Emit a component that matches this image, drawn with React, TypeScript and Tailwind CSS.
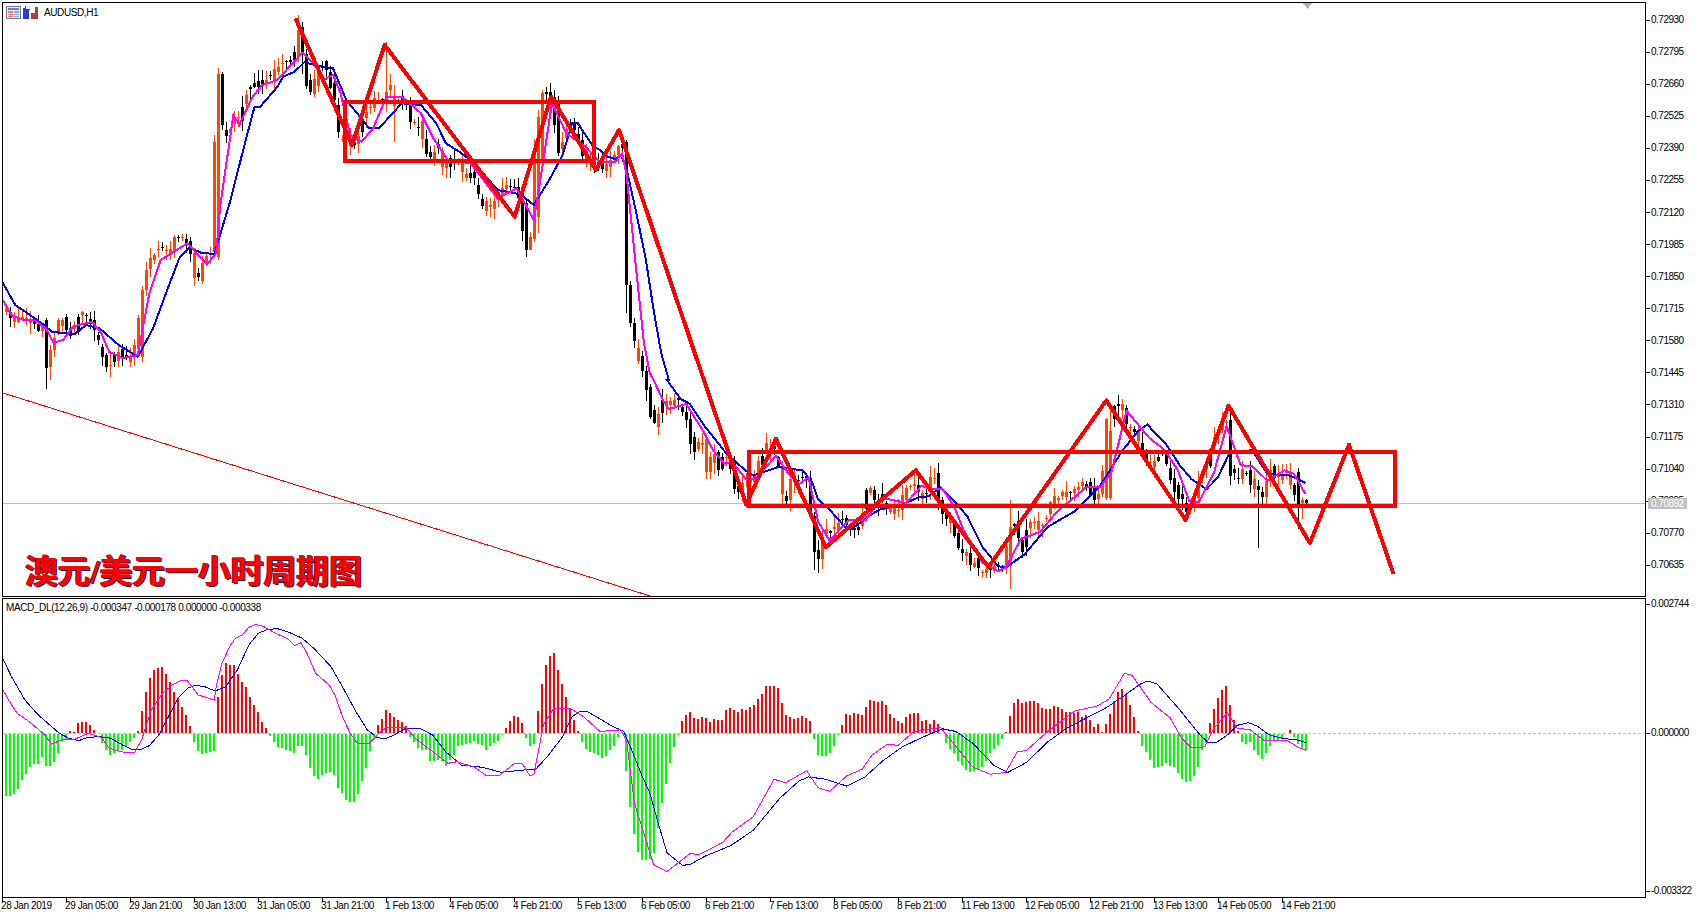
import React from "react";

type P = [number, number];
const Z1 = (a: number[][]): P[] => a.map(([x, y]) => [x / 2.613, y / 3]);
const Z2 = (a: number[][]): P[] => a.map(([x, y]) => [x / 2.613, 400 + y / 3]);
const Z3 = (a: number[][]): P[] => a.map(([x, y]) => [600 + x / 2.613, y / 3]);
const Z4 = (a: number[][]): P[] => a.map(([x, y]) => [600 + x / 2.613, 380 + y / 2.93]);
const Z5 = (a: number[][]): P[] => a.map(([x, y]) => [1100 + x / 2.63, 380 + y / 2.93]);
const pts = (a: P[]) => a.map(([x, y]) => `${x.toFixed(1)},${y.toFixed(1)}`).join(" ");

const blueThick: P[] = [
  ...Z1([[7,848],[40,915],[85,950],[115,975],[135,995],[170,1000],[195,1003],[225,975],[260,985],[310,1035],[360,1070],[400,985],[440,860],[470,770],[495,742],[525,758],[560,762],[600,610],[640,430],[665,320],[680,320],[725,260],[740,230],[770,215],[795,187],[830,197],[870,205],[905,300],[965,385],[990,385],[1050,310],[1100,315],[1140,370],[1165,430],[1200,455],[1240,490],[1300,570],[1360,583],[1395,615],[1440,530],[1470,465],[1495,370],[1510,370],[1550,440]]),
  ...Z3([[0,450],[20,470],[40,477],[55,465],[70,510],[95,640],[120,780],[140,930],[160,1060],[180,1140]]),
  ...Z4([[175,0],[210,55],[235,70],[270,130],[330,215],[380,265],[400,280],[440,265],[465,255],[530,265],[555,300],[570,350],[600,380],[640,430],[660,435],[700,400],[730,380],[790,365],[830,345],[860,340],[890,315],[930,360],[960,400],[1000,490],[1040,545],[1060,550],[1110,510],[1170,430],[1240,385],[1280,340],[1306,312]]),
  ...Z5([[60,205],[100,150],[125,130],[140,150],[175,190],[210,250],[240,290],[280,320],[310,285],[340,215],[400,205],[440,275],[500,280],[541,302]]),
];
const pinkThick: P[] = [
  ...Z1([[7,900],[30,945],[60,960],[90,960],[120,985],[140,1028],[165,1020],[190,980],[240,965],[265,1000],[285,1055],[320,1075],[360,1065],[390,880],[420,780],[490,730],[540,793],[565,760],[575,620],[610,345],[625,375],[660,290],[685,255],[725,240],[790,158],[820,190],[845,240],[870,225],[890,280],[915,405],[945,425],[975,385],[1010,290],[1050,290],[1100,340],[1130,410],[1170,480],[1230,490],[1300,595],[1350,565],[1395,660],[1420,480],[1442,310],[1480,400],[1530,440]]),
  ...Z3([[0,487],[40,485],[58,460],[70,530],[85,700],[100,870],[115,1030],[130,1120]]),
  ...Z4([[140,0],[165,60],[180,85],[225,70],[270,150],[295,205],[325,245],[345,240],[385,295],[410,285],[460,222],[490,270],[520,305],[545,285],[570,415],[600,470],[650,410],[695,410],[735,345],[800,360],[840,310],[865,320],[895,320],[925,370],[950,440],[1000,535],[1040,560],[1060,550],[1100,465],[1150,445],[1195,385],[1270,315],[1300,312]]),
  ...Z5([[0,315],[30,270],[70,90],[100,130],[130,170],[170,205],[205,265],[235,355],[260,358],[300,270],[333,135],[370,250],[400,252],[440,295],[485,265],[510,275],[541,335]]),
];
const zigzag: P[] = [
  ...Z1([[772,55],[920,435],[1005,135],[1345,650],[1440,290],[1557,510]]),
  ...Z3([[50,390]]),
  ...Z4([[382,365],[460,172],[590,490],[825,265],[1015,548],[1323,60],[1530,410]]),
  ...Z5([[338,75],[552,478],[655,190],[772,568]]),
];
const pricePath: P[] = [
  ...Z1([[7,920],[15,950],[30,945],[45,975],[60,940],[75,965],[90,950],[100,1000],[118,970],[125,1100],[135,1050],[150,990],[165,945],[175,985],[195,1000],[205,940],[225,935],[245,985],[265,1040],[275,1090],[295,1095],[310,1050],[335,1085],[360,1040],[372,870],[385,810],[395,770],[425,740],[445,760],[465,710],[490,710],[500,760],[510,820],[525,830],[535,770],[555,760],[570,230],[582,370],[600,415],[612,340],[625,370],[640,300],[655,250],[680,250],[715,225],[740,180],[770,180],[782,70],[790,130],[802,230],[810,280],[820,265],[835,210],[850,190],[875,280],[888,410],[905,400],[925,450],[945,380],[965,320],[990,295],[1010,300],[1020,235],[1030,310],[1050,290],[1065,310],[1075,370],[1100,370],[1125,480],[1145,430],[1165,510],[1180,480],[1200,470],[1210,520],[1240,530],[1255,590],[1275,630],[1300,590],[1325,550],[1355,570],[1375,750],[1390,710],[1405,350],[1420,290],[1445,290],[1460,460],[1480,400],[1500,370],[1520,450],[1540,490]]),
  ...Z3([[0,490],[10,518],[25,480],[45,470],[55,430],[65,440],[70,860],[80,970],[90,1025],[100,1070],[110,1090],[120,1135]]),
  ...Z4([[130,50],[140,130],[152,130],[165,60],[180,65],[205,60],[225,100],[247,210],[258,190],[270,165],[280,265],[290,245],[300,190],[310,270],[330,220],[345,250],[360,330],[380,290],[400,300],[415,250],[435,200],[450,190],[470,240],[478,345],[490,355],[500,290],[520,290],[540,270],[550,320],[562,500],[572,525],[582,470],[590,440],[615,430],[635,410],[655,450],[665,440],[680,425],[695,350],[708,310],[718,360],[735,340],[760,380],[790,370],[800,320],[820,300],[845,340],[860,320],[875,260],[885,330],[905,410],[920,420],[936,475],[947,520],[958,475],[970,545],[985,530],[1000,565],[1030,550],[1050,560],[1060,550],[1072,430],[1085,410],[1105,505],[1125,420],[1145,430],[1165,410],[1185,355],[1200,350],[1220,330],[1250,320],[1270,300],[1295,340]]),
  ...Z5([[0,340],[10,270],[25,150],[45,70],[60,65],[75,130],[95,160],[115,205],[140,260],[165,200],[185,270],[205,330],[220,360],[235,385],[250,350],[270,265],[285,240],[300,160],[320,145],[335,80],[345,270],[365,280],[385,265],[405,310],[415,320],[427,355],[437,305],[450,250],[465,280],[480,285],[495,270],[510,330],[522,355],[532,365],[543,355]]),
];

const yAt = (path: P[], x: number) => {
  if (x <= path[0][0]) return path[0][1];
  for (let i = 1; i < path.length; i++) {
    if (x <= path[i][0]) {
      const [x0, y0] = path[i - 1];
      const [x1, y1] = path[i];
      return y0 + ((y1 - y0) * (x - x0)) / Math.max(x1 - x0, 0.01);
    }
  }
  return path[path.length - 1][1];
};
const rnd = (i: number, k: number) => {
  const s = Math.sin(i * 12.9898 + k * 78.233) * 43758.5453;
  return s - Math.floor(s);
};

// x: [bodyTop, bodyBottom, up?, high, low]
const overrides: Record<number, [number, number, boolean, number, number]> = {
  46: [320, 368, false, 318, 389],
  50: [350, 367, true, 345, 380],
  142: [290, 357, true, 286, 362],
  146: [270, 290, true, 262, 296],
  218: [74, 257, true, 68, 260],
  222: [74, 125, false, 72, 130],
  298: [30, 57, true, 15, 62],
  302: [27, 53, false, 22, 74],
  386: [92, 100, true, 42, 112],
  394: [98, 106, true, 85, 142],
  526: [203, 250, false, 200, 257],
  530: [237, 250, true, 232, 250],
  538: [117, 217, true, 110, 233],
  542: [93, 160, true, 90, 170],
  558: [100, 153, false, 96, 156],
  626: [142, 285, false, 140, 313],
  630: [285, 323, false, 281, 327],
  634: [323, 341, false, 318, 348],
  814: [516, 552, false, 512, 570],
  818: [550, 559, false, 540, 573],
  822: [540, 559, true, 530, 569],
  1010: [527, 566, true, 500, 589],
  1106: [419, 498, true, 418, 500],
  1110: [431, 498, true, 410, 500],
  1228: [407, 472, false, 405, 478],
  1258: [486, 490, false, 480, 548],
  1298: [472, 505, false, 468, 529],
  1302: [500, 503, true, 497, 519],
  1306: [500, 503, false, 499, 505],
};

const candles = Array.from({ length: 326 }, (_, i) => {
  const x = 6 + 4 * i;
  const o = overrides[x];
  if (o) return { x, top: o[0], bot: o[1], up: o[2], high: o[3], low: o[4] };
  const c0 = yAt(pricePath, x - 2) + (rnd(i, 1) - 0.5) * 9;
  const c1 = yAt(pricePath, x + 2) + (rnd(i, 2) - 0.5) * 9;
  const top = Math.round(Math.min(c0, c1));
  const bot = Math.max(Math.round(Math.max(c0, c1)), top + 1);
  const high = Math.round(top - rnd(i, 3) * 10 - 1);
  const low = Math.round(bot + rnd(i, 4) * 10 + 1);
  return { x, top, bot, up: rnd(i, 5) < 0.2 ? c1 > c0 : c1 < c0, high, low };
});

const hist = [
  -62,-62,-60,-55,-46,-40,-33,-30,-30,-23,-32,-32,-28,-19,-8,-5,
  2,1,10,11,11,8,3,0,
  -9,-16,-21,-19,-16,-16,-12,-8,-4,
  2,22,41,55,63,65,66,59,51,41,35,26,18,7,
  -8,-17,-20,-19,-18,-17,
  36,58,70,68,68,59,51,46,36,28,21,11,5,
  -2,-8,-13,-14,-16,-17,-19,-12,-12,-21,-34,-42,-45,-41,-39,-38,-41,-54,-59,-66,-68,-68,-60,-47,-34,-17,-3,
  8,14,23,20,16,13,11,7,
  -3,-8,-14,-16,-16,-27,-27,-26,-27,-32,-26,-21,-12,-11,-10,-9,-7,-10,-11,-16,-12,-9,-7,-1,
  5,12,17,16,10,
  -4,-12,-10,
  22,49,68,77,80,63,49,36,24,13,2,
  -8,-15,-18,-19,-21,
  -24,-22,-16,-12,-3,0,
  -37,-73,-100,-118,-126,-126,-125,-119,-94,-69,-50,-29,-13,-1,
  12,18,21,15,14,16,15,11,14,13,13,23,25,23,21,24,23,26,28,34,39,47,47,47,45,30,18,16,14,15,17,15,12,
  -5,-21,-22,-22,-19,-12,-1,
  8,19,18,20,19,18,26,33,32,31,32,28,19,15,12,10,16,19,20,20,12,13,9,13,9,0,
  -9,-15,-19,-27,-31,-36,-38,-37,-35,-33,-27,-19,-15,-11,-5,
  1,17,30,34,30,31,32,32,30,25,24,24,27,26,24,21,21,20,21,16,18,13,6,9,1,9,19,32,41,44,39,28,16,2,
  -12,-18,-26,-34,-33,-32,-29,-32,-33,-39,-45,-48,-47,-42,-33,-16,-9,
  10,24,35,43,47,28,13,2,
  -8,-10,-8,-16,-21,-25,-19,-12,-6,-6,-4,0,3,-3,-10,-15,-16,
];

const macdBlue: P[] = [
  ...Z2([[7,775],[30,830],[65,900],[100,945],[130,975],[155,1000],[180,1015],[205,1022],[230,1012],[260,1010],[290,1015],[320,1035],[345,1048],[365,1050],[390,1037],[415,1005],[440,950],[465,895],[490,865],[510,856],[535,860],[562,873],[590,860],[620,810],[650,735],[675,700],[700,688],[725,686],[755,697],[790,715],[820,745],[865,800],[895,860],[930,935],[960,990],[985,1012],[1005,1017],[1030,1005],[1060,985],[1100,987],[1130,1005],[1165,1055],[1205,1095],[1260,1102],[1310,1117],[1350,1112],[1400,1107],[1430,1070],[1470,1010],[1495,950],[1515,934],[1535,935]]),
  ...Z4([[0,993],[30,1013],[62,1030],[85,1090],[110,1160],[130,1210],[150,1290],[175,1385],[215,1422],[235,1420],[275,1395],[340,1365],[400,1320],[470,1225],[520,1175],[545,1163],[590,1170],[645,1190],[690,1165],[740,1115],[790,1075],[840,1048],[895,1022],[930,1030],[975,1065],[1030,1130],[1065,1150],[1115,1120],[1170,1060],[1220,1020],[1320,962],[1370,925],[1410,892],[1430,882],[1455,890],[1510,960]]),
  ...Z5([[263,1040],[285,1063],[305,1063],[335,1040],[360,1012],[390,1004],[415,1015],[445,1040],[480,1050],[520,1055],[541,1062]]),
];
const macdPink: P[] = [
  ...Z2([[7,868],[25,905],[45,940],[80,968],[115,1003],[135,1032],[160,1020],[195,1018],[230,1000],[265,1012],[285,1045],[320,1056],[352,1057],[370,1020],[395,930],[425,880],[450,855],[475,841],[490,842],[518,885],[560,900],[565,860],[580,790],[600,740],[615,715],[635,703],[650,682],[668,673],[690,680],[720,700],[750,715],[770,737],[785,728],[800,755],[825,820],[860,855],[875,885],[895,950],[915,1000],[935,1032],[965,1030],[990,1000],[1010,982],[1060,982],[1085,1015],[1125,1050],[1170,1090],[1195,1085],[1240,1102],[1270,1126],[1305,1126],[1345,1090],[1365,1092],[1385,1127],[1395,1123],[1420,975],[1447,925],[1490,925],[1525,950]]),
  ...Z4([[0,1030],[55,1025],[70,1060],[90,1240],[115,1330],[140,1420],[175,1440],[235,1388],[260,1390],[320,1355],[345,1325],[400,1280],[455,1170],[485,1180],[540,1145],[570,1195],[600,1205],[645,1160],[685,1140],[710,1100],[750,1068],[780,1070],[820,1030],[890,1018],[920,1060],[975,1135],[1020,1155],[1060,1150],[1090,1090],[1115,1085],[1165,1035],[1240,970],[1300,955],[1330,935],[1370,860],[1390,865],[1440,945],[1490,990],[1520,1050]]),
  ...Z5([[240,1078],[275,1075],[300,1020],[335,975],[360,1020],[395,1025],[430,1055],[490,1055],[520,1075],[541,1085]]),
];

const prices = ["0.72930","0.72795","0.72660","0.72525","0.72390","0.72255","0.72120","0.71985","0.71850","0.71715","0.71580","0.71445","0.71310","0.71175","0.71040","0.70905","0.70770","0.70635"];
const times = ["28 Jan 2019","29 Jan 05:00","29 Jan 21:00","30 Jan 13:00","31 Jan 05:00","31 Jan 21:00","1 Feb 13:00","4 Feb 05:00","4 Feb 21:00","5 Feb 13:00","6 Feb 05:00","6 Feb 21:00","7 Feb 13:00","8 Feb 05:00","8 Feb 21:00","11 Feb 13:00","12 Feb 05:00","12 Feb 21:00","13 Feb 13:00","14 Feb 05:00","14 Feb 21:00"];

function ToolIcons() {
  return (
    <svg width="34" height="14" viewBox="0 0 34 14" shapeRendering="crispEdges">
      <rect x="0.5" y="0.5" width="14" height="12" fill="#e8ecf8" stroke="#6f7a90" />
      <rect x="2" y="2" width="11" height="2" fill="#5f82dc" />
      <rect x="2" y="5" width="5" height="2" fill="#f07a68" />
      <rect x="8" y="5" width="5" height="2" fill="#8aa4ea" />
      <rect x="2" y="8" width="5" height="1" fill="#f07a68" />
      <rect x="8" y="8" width="5" height="1" fill="#8aa4ea" />
      <rect x="2" y="10" width="5" height="1" fill="#f07a68" />
      <rect x="8" y="10" width="5" height="1" fill="#8aa4ea" />
      <path d="M17 2h2v-2h5v4h-1v9h-6z" fill="#2b3fd0" />
      <path d="M25 13v-6h4v-6h3v12z" fill="#b83a3a" />
      <rect x="20" y="0" width="5" height="3" fill="#ededed" />
    </svg>
  );
}

function AxisLabel({ text }: { text: string }) {
  return (
    <div className="flex h-[10px] items-center">
      <div className="h-px w-[4px] bg-black" />
      <span className="ml-px whitespace-nowrap text-[10px] leading-[10px] tracking-[-0.5px] text-black">{text}</span>
    </div>
  );
}

export default function App() {
  return (
    <div className="flex h-[914px] w-[1696px] flex-col overflow-hidden bg-white pl-[2px] pt-[2px] [font-family:'Liberation_Sans',sans-serif]">
      {/* main price pane */}
      <div className="flex h-[595px] shrink-0">
        <div className="relative w-[1643px] shrink-0 overflow-hidden border-b border-l border-t border-black">
          <svg width="1642" height="593" viewBox="3 3 1642 593" className="block">
            <line x1="3" y1="503.5" x2="1645" y2="503.5" stroke="#c0c0c0" strokeWidth="1" shapeRendering="crispEdges" />
            <g shapeRendering="crispEdges">
              {candles.map((c) => (
                <g key={c.x} fill={c.up ? "#ff4500" : "#000000"}>
                  <rect x={c.x} y={c.high} width="1" height={c.low - c.high} />
                  <rect x={c.x - 1} y={c.top} width="3" height={c.bot - c.top} />
                </g>
              ))}
            </g>
            <polyline points={pts(blueThick)} fill="none" stroke="#0000ff" strokeWidth="2" shapeRendering="crispEdges" />
            <polyline points={pts(pinkThick)} fill="none" stroke="#ff00ff" strokeWidth="2" shapeRendering="crispEdges" />
            <line x1="3" y1="393" x2="650" y2="596" stroke="#ff0000" strokeWidth="1" shapeRendering="crispEdges" />
            <rect x="345" y="102" width="249" height="59" fill="none" stroke="#ff0000" strokeWidth="3.6" shapeRendering="crispEdges" />
            <rect x="749" y="452" width="646" height="54" fill="none" stroke="#ff0000" strokeWidth="3.6" shapeRendering="crispEdges" />
            <polyline points={pts(zigzag)} fill="none" stroke="#ff0000" strokeWidth="4" strokeLinejoin="round" shapeRendering="crispEdges" />
            <path d="M1303 3h9l-4.5 6z" fill="#b0b0b0" shapeRendering="crispEdges" />
          </svg>
          <div className="absolute left-[3px] top-[3px] flex items-center gap-[4px]">
            <ToolIcons />
            <span className="text-[10px] leading-[14px] tracking-[-0.4px] text-black">AUDUSD,H1</span>
          </div>
          <div className="absolute left-[22px] top-[550px] whitespace-nowrap text-[33px] font-bold leading-[38px] tracking-[-0.2px] text-[#ff0000] [font-family:'Liberation_Serif','Noto_Sans_CJK_SC',serif] [text-shadow:1px_1px_0_#000060,-1px_0_0_#cc0000]">
            澳元/美元一小时周期图
          </div>
        </div>
        <div className="relative w-[51px] shrink-0 border-l border-black pt-[2px]">
          {prices.map((p) => (
            <div key={p} className="flex h-[32.09px] items-center">
              <AxisLabel text={p} />
            </div>
          ))}
          <div className="absolute left-[2px] top-[496px] h-[11px] w-[39px] bg-[#c0c0c0] pl-[3px] text-[10px] leading-[11px] tracking-[-0.5px] text-white">
            0.70892
          </div>
        </div>
      </div>

      {/* MACD pane */}
      <div className="mt-px flex h-[300px] shrink-0">
        <div className="relative w-[1643px] shrink-0 overflow-hidden border-b border-l border-t border-black">
          <svg width="1642" height="298" viewBox="3 599 1642 298" className="block">
            <line x1="3" y1="733.5" x2="1645" y2="733.5" stroke="#c0c0c0" strokeWidth="1" strokeDasharray="3 2" shapeRendering="crispEdges" />
            <g shapeRendering="crispEdges">
              {hist.map((h, i) =>
                h === 0 ? null : (
                  <rect
                    key={i}
                    x={5 + 4 * i}
                    y={h > 0 ? 733 - h : 734}
                    width="2"
                    height={Math.abs(h)}
                    fill={h > 0 ? "#ff0000" : "#00ff00"}
                  />
                )
              )}
            </g>
            <polyline points={pts(macdBlue)} fill="none" stroke="#0000ff" strokeWidth="1" shapeRendering="crispEdges" />
            <polyline points={pts(macdPink)} fill="none" stroke="#ff00ff" strokeWidth="1" shapeRendering="crispEdges" />
          </svg>
          <div className="absolute left-[3px] top-[2px] whitespace-nowrap text-[10px] leading-[14px] tracking-[-0.38px] text-black">
            MACD_DL(12,26,9) -0.000347 -0.000178 0.000000 -0.000338
          </div>
        </div>
        <div className="w-[51px] shrink-0 border-l border-black pt-px">
          <AxisLabel text="0.002744" />
          <div className="mt-[119px]">
            <AxisLabel text="0.000000" />
          </div>
          <div className="mt-[148px]">
            <AxisLabel text="-0.003322" />
          </div>
        </div>
      </div>

      {/* time axis */}
      <div className="flex shrink-0">
        {times.map((t) => (
          <div key={t} className="flex w-[64px] shrink-0 flex-col items-start">
            <div className="h-[4px] w-px bg-black" />
            <span className="-ml-px -mt-px whitespace-nowrap text-[10px] leading-[10px] tracking-[-0.4px] text-black">{t}</span>
          </div>
        ))}
      </div>
    </div>
  );
}
